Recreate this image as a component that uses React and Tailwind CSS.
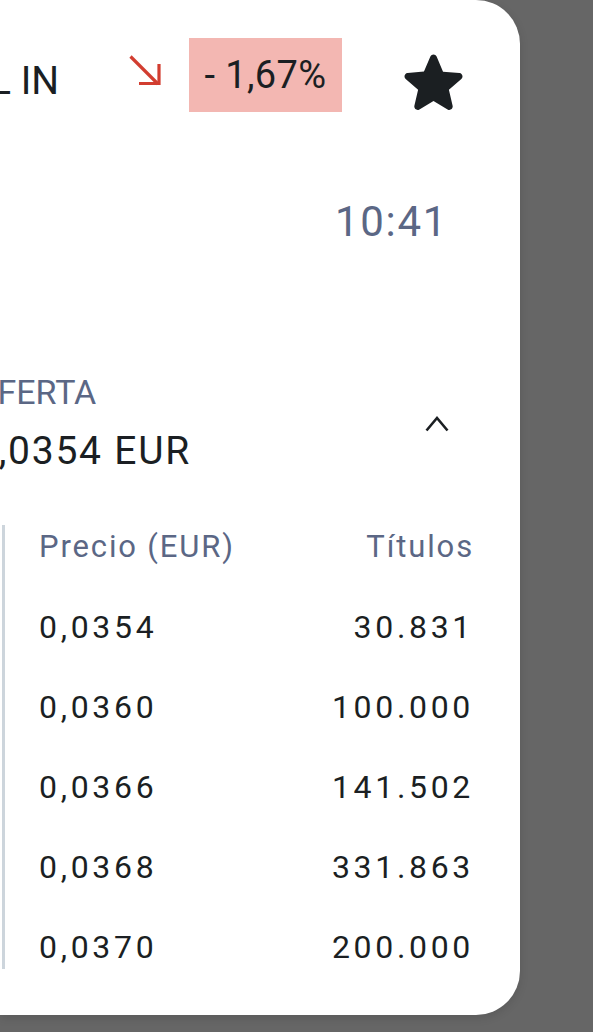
import React from 'react';

const rows = [
  { price: '0,0354', qty: '30.831' },
  { price: '0,0360', qty: '100.000' },
  { price: '0,0366', qty: '141.502' },
  { price: '0,0368', qty: '331.863' },
  { price: '0,0370', qty: '200.000' },
];

const font = { fontFamily: 'Roboto, "Liberation Sans", sans-serif' };

const DownArrow = () => (
  <svg width="32" height="31" viewBox="0 0 32 31" fill="none" stroke="#d23d30" strokeWidth="3.2">
    <path d="M1.5 1.5 L29 29" />
    <path d="M10 28.5 H30 V9" />
  </svg>
);

const StarIcon = () => (
  <svg width="59" height="59" viewBox="3.3 2.6 17.4 17.3" fill="#1b1f22">
    <path d="M12 17.27l4.15 2.51c.76.46 1.69-.22 1.49-1.08l-1.1-4.72 3.67-3.18c.67-.58.31-1.68-.57-1.75l-4.83-.41-1.89-4.46c-.34-.81-1.5-.81-1.84 0L9.19 8.63l-4.83.41c-.88.07-1.24 1.17-.57 1.75l3.67 3.18-1.1 4.72c-.2.86.73 1.54 1.49 1.08l4.15-2.5z" />
  </svg>
);

const ChevronUp = () => (
  <svg width="24" height="17" viewBox="0 0 24 17" fill="none" stroke="#1b1f22" strokeWidth="2.6">
    <path d="M1.5 15.5 L12 3 L22.5 15.5" />
  </svg>
);

export default function App() {
  return (
    <div className="w-[593px] h-[1032px] overflow-hidden bg-[#666666]" style={font}>
      <div className="w-[520px] h-[1015px] bg-white rounded-r-[44px] shadow-[0_3px_10px_rgba(0,0,0,0.12)] flex flex-col">
        {/* name, change badge, favourite */}
        <div className="flex items-start mt-[38px] h-[74px]">
          <span className="w-[139px] ml-[-10px] mt-[24px] text-[39px] leading-none text-[#1b1f23] whitespace-nowrap">
            L IN
          </span>
          <span className="mt-[17px]">
            <DownArrow />
          </span>
          <div className="ml-[28px] w-[153px] h-[74px] bg-[#f3b7b2] flex items-center justify-center text-[38px] leading-none text-[#1b1f23] tracking-[0.01em]">
            - 1,67%
          </div>
          <span className="ml-[62px] mt-[13px]">
            <StarIcon />
          </span>
        </div>

        <div className="mt-[89px] pr-[72px] flex justify-end text-[42px] leading-none text-[#5b6785] tracking-[0.04em]">
          10:41
        </div>

        {/* best offer */}
        <div className="mt-[132px] flex justify-between items-start pr-[71px]">
          <div className="flex flex-col">
            <span className="ml-[-26px] text-[34px] leading-none text-[#5b6785] whitespace-nowrap">
              OFERTA
            </span>
            <span className="ml-[-25px] mt-[23px] text-[39px] leading-none text-[#1b1f23] tracking-[0.045em] whitespace-nowrap">
              0,0354 EUR
            </span>
          </div>
          <span className="mt-[40px]">
            <ChevronUp />
          </span>
        </div>

        {/* order book */}
        <div className="mt-[54px] ml-[2px] w-[472px] border-l-[3px] border-[#cdd5dc] pt-[6px] pb-[6px] pl-[34px] flex flex-col gap-[48px]">
          <div className="flex justify-between text-[31px] leading-[32px] text-[#5b6785] tracking-[0.06em]">
            <span>Precio (EUR)</span>
            <span>Títulos</span>
          </div>
          {rows.map((r) => (
            <div
              key={r.price}
              className="flex justify-between text-[32px] leading-[32px] text-[#1b1f23] tracking-[0.115em]"
            >
              <span>{r.price}</span>
              <span>{r.qty}</span>
            </div>
          ))}
        </div>
      </div>
    </div>
  );
}
